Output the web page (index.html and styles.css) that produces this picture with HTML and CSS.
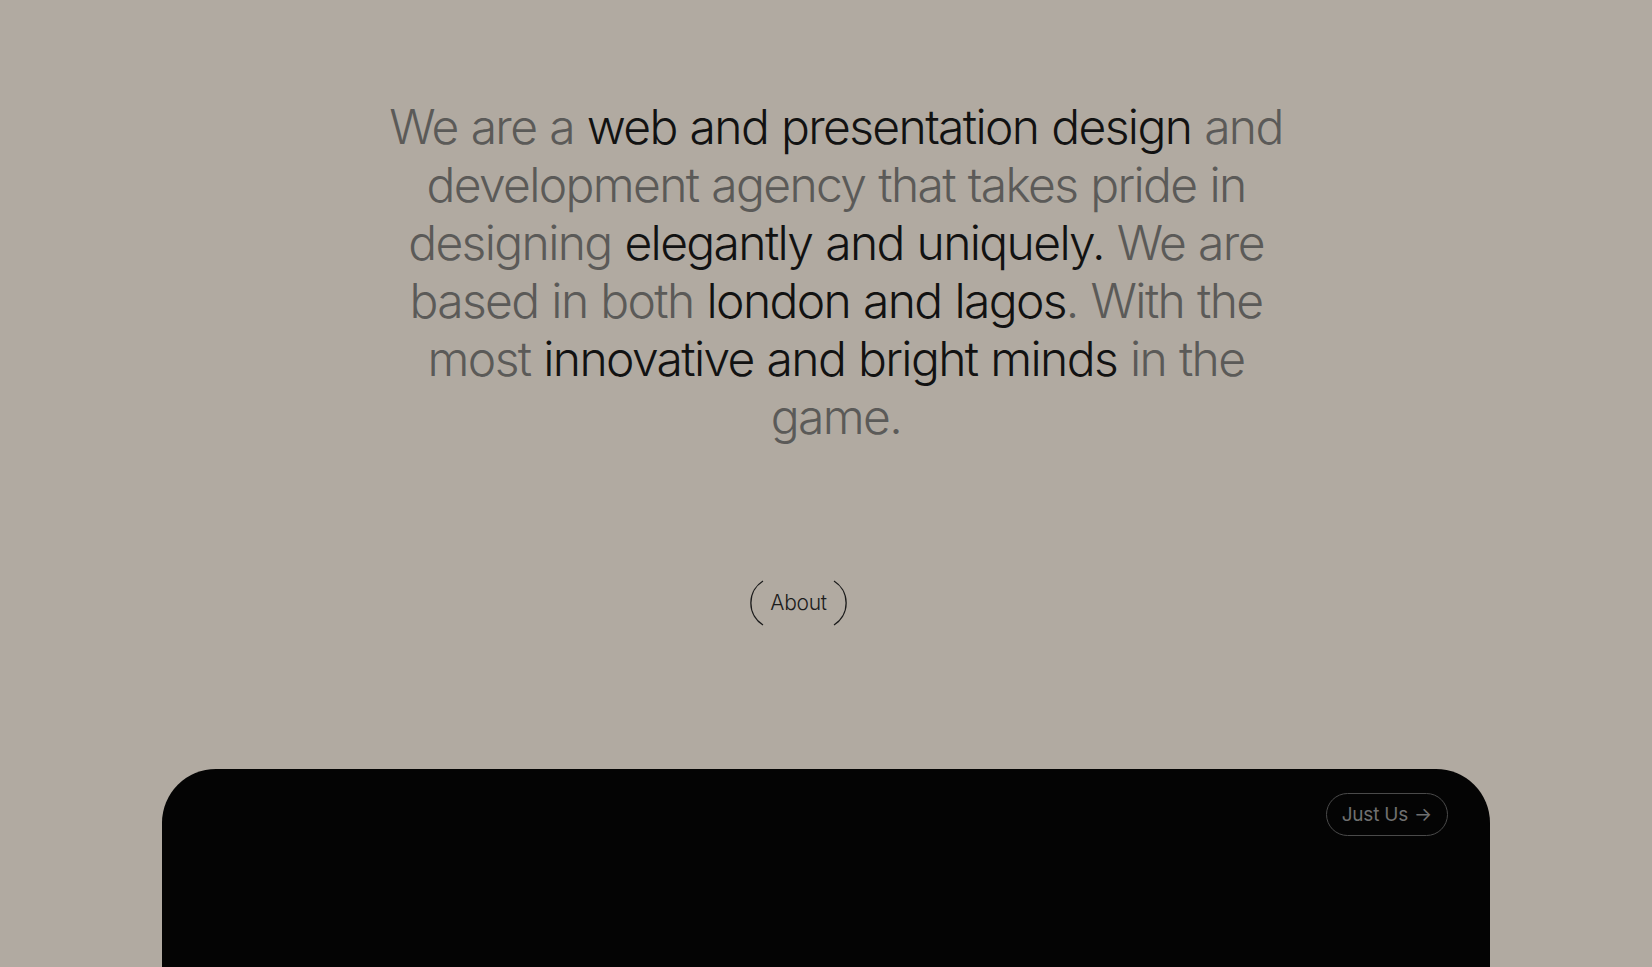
FILE: index.html
```html
<!DOCTYPE html>
<html lang="en">
<head>
<meta charset="utf-8">
<title>Agency</title>
<link rel="stylesheet" href="styles.css">
</head>
<body>
<main class="page">
  <section class="intro">
    <p class="statement">
      <span class="muted">We are a</span> <span class="strong">web and presentation design</span> <span class="muted">and development agency that takes pride in designing</span> <span class="strong">elegantly and uniquely.</span> <span class="muted">We are based in both</span> <span class="strong">london and lagos</span><span class="muted">. With the most</span> <span class="strong">innovative and bright minds</span> <span class="muted">in the game.</span>
    </p>
  </section>
  <div class="about-row">
    <a class="about-link" href="#">
      <svg class="paren" width="14" height="46" viewBox="0 0 14 46" aria-hidden="true"><path d="M13 1 A26 26 0 0 0 13 45" fill="none" stroke="#1c1c1c" stroke-width="1.3"/></svg>
      <span class="about-text">About</span>
      <svg class="paren" width="14" height="46" viewBox="0 0 14 46" aria-hidden="true"><path d="M1 1 A26 26 0 0 1 1 45" fill="none" stroke="#1c1c1c" stroke-width="1.3"/></svg>
    </a>
  </div>
  <section class="showcase">
    <a class="pill" href="#">Just Us <span class="arrow">&rarr;</span></a>
  </section>
</main>
</body>
</html>
```
FILE: styles.css
```css
html, body {
  margin: 0;
  padding: 0;
}
body {
  background: #b1aaa1;
  font-family: Inter, "Noto Sans", sans-serif;
  overflow: hidden;
}
.page {
  display: flex;
  flex-direction: column;
  align-items: center;
}
.intro {
  width: 940px;
  padding-left: 20px;
  box-sizing: border-box;
  padding-top: 98px;
}
.statement {
  margin: 0;
  text-align: center;
  font-size: 48px;
  line-height: 58px;
  font-weight: 300;
  letter-spacing: -1.65px;
  word-spacing: 1px;
}
.muted {
  color: #5b5a58;
}
.strong {
  color: #121212;
}
.about-row {
  margin-top: 133px;
  padding-right: 55px;
  display: flex;
  justify-content: center;
}
.about-link {
  display: flex;
  align-items: center;
  gap: 6px;
  text-decoration: none;
  color: #1c1c1c;
  height: 47px;
}
.paren {
  display: block;
  flex: none;
}
.about-text {
  font-size: 21px;
  font-weight: 300;
  letter-spacing: -0.3px;
}
.showcase {
  margin-top: 143px;
  width: 1328px;
  height: 600px;
  background: #040404;
  border-radius: 54px 54px 0 0;
  display: flex;
  justify-content: flex-end;
  align-items: flex-start;
  padding: 24px 42px 0 0;
  box-sizing: border-box;
}
.pill {
  display: flex;
  align-items: center;
  gap: 6px;
  height: 43px;
  padding: 0 15px;
  border: 1px solid #4a4a4a;
  border-radius: 22px;
  box-sizing: border-box;
  color: #707070;
  font-size: 19px;
  font-weight: 400;
  text-decoration: none;
  letter-spacing: -0.2px;
}
.arrow {
  font-size: 19px;
}
```
